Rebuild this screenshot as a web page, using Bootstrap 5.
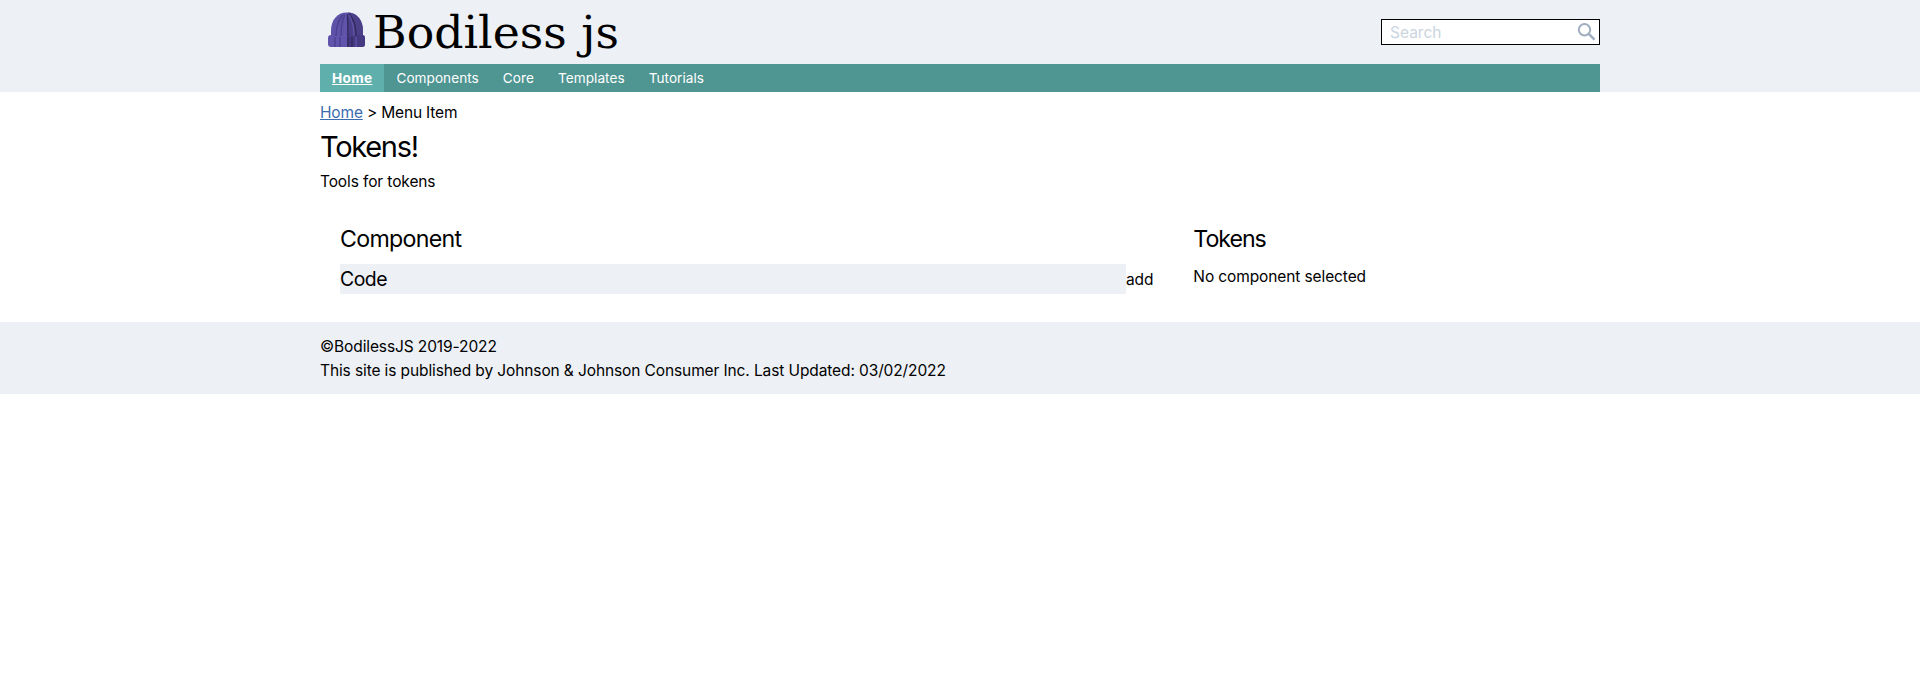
<!DOCTYPE html>
<html lang="en">
<head>
<meta charset="utf-8">
<meta name="viewport" content="width=device-width, initial-scale=1">
<title>Tokens!</title>
<link href="https://cdn.jsdelivr.net/npm/bootstrap@5.3.0/dist/css/bootstrap.min.css" rel="stylesheet">
<style>
body{font-family:Inter,"Liberation Sans",sans-serif;font-size:15.5px;line-height:24px;color:#000;background:#fff;letter-spacing:-.11px}
.site-wrap{width:1280px;margin:0 auto}
.tinted{background:#edf0f5}
.brand-row{height:64px}
.search-box{width:219px;height:26px;border:1px solid #000}
.search-box input{font-size:15.5px;line-height:24px;padding:1px 8px 0;outline:0;height:24px}
.search-box input::placeholder{color:#cbd5e0;opacity:1}
.main-menu{background:#4f9592;height:28px;font-size:13.6px;line-height:20px;letter-spacing:0}
.main-menu a{color:#fff;padding:4px 12px;text-decoration:none}
.main-menu a + a{letter-spacing:.05px}
.main-menu a.active{background:#5fb0ac;font-weight:700;text-decoration:underline;letter-spacing:.35px}
.crumb{letter-spacing:-.17px;padding-top:9px}
.crumb a{color:#3b6cb0}
h1{font-size:29px;line-height:37px;font-weight:400;margin:0;padding-top:3px;letter-spacing:-1.3px}
h2{font-size:23.2px;line-height:32px;font-weight:400;margin:0;letter-spacing:-.7px}
.tokens-title{letter-spacing:-1.05px}
.intro{padding-top:5px}
.tool-columns{padding-top:9px}
.pane{padding:20px}
.pane-body{margin-top:9px}
.selection{margin-top:10px}
.add-link{padding-top:1px}
.code-title{font-size:19.4px;line-height:30px;letter-spacing:-.5px}
.site-footer{margin-top:8px;padding:13px 0 11px}
</style>
</head>
<body>
<header class="tinted">
  <div class="site-wrap">
    <div class="brand-row d-flex align-items-center justify-content-between">
      <svg width="310" height="64" viewBox="0 0 310 64" role="img" aria-label="Bodiless js">
        <path d="M11 36V31C11 20 17 12.500 27 12.500S43 20 43 31v5z" fill="#5e52a8"/>
        <path d="M28 12.500C38 13 43 21 43 31v5H28z" fill="#4b4088"/>
        <rect x="8" y="35" width="37" height="12" rx="3" fill="#6054ac"/>
        <path d="M27 35h15q3 0 3 3v6q0 3-3 3H27z" fill="#453a82"/>
        <path d="M16 36c0-9 2-16 7-21M21 36c0-9 1-16 4-21M31 36c0-9-1-16-3-22M15 37v10M20 37v10" stroke="#493e8b" stroke-width="1.200" fill="none"/>
        <path d="M28 36c0-9 0-16-1-22M36 36c0-10-2-17-7-22M28 37v10M32 37v10" stroke="#34295f" stroke-width="1.400" fill="none"/>
        <path d="M24.500 36c0-9 .5-15 2-22M34 36c0-9-2-16-5-21M36 37v10" stroke="#6257ab" stroke-width="1.200" fill="none"/>
        <text x="53" y="47.500" font-family="'DejaVu Serif','Liberation Serif',serif" font-size="45" letter-spacing="0" textLength="246" lengthAdjust="spacingAndGlyphs" fill="#000">Bodiless js</text>
      </svg>
      <form class="search-box bg-white d-flex align-items-center">
        <input class="border-0 bg-transparent flex-grow-1 w-100" type="text" placeholder="Search" aria-label="Search">
        <svg class="flex-shrink-0" width="24" height="24" viewBox="0 0 24 24" fill="none" stroke="#a0aec0" stroke-width="2"><circle cx="9.500" cy="9.700" r="5.700"/><path d="M13.500 13.700l6 6" stroke-width="2.600"/></svg>
      </form>
    </div>
    <nav class="main-menu d-flex">
      <a class="active" href="#">Home</a><a href="#">Components</a><a href="#">Core</a><a href="#">Templates</a><a href="#">Tutorials</a>
    </nav>
  </div>
</header>
<main class="site-wrap">
  <div class="crumb"><a href="#">Home</a> &gt; Menu Item</div>
  <h1>Tokens!</h1>
  <p class="intro mb-0">Tools for tokens</p>
  <div class="tool-columns row g-0">
    <section class="col-8 pane">
      <h2>Component</h2>
      <div class="pane-body d-flex align-items-center">
        <div class="code-title tinted flex-grow-1">Code</div><span class="add-link">add</span>
      </div>
    </section>
    <section class="col-4 pane">
      <h2 class="tokens-title">Tokens</h2>
      <div class="selection">No component selected</div>
    </section>
  </div>
</main>
<footer class="site-footer tinted">
  <div class="site-wrap">
    <div>©BodilessJS 2019-2022</div>
    <div>This site is published by Johnson &amp; Johnson Consumer Inc. Last Updated: 03/02/2022</div>
  </div>
</footer>
<script src="https://cdn.jsdelivr.net/npm/bootstrap@5.3.0/dist/js/bootstrap.bundle.min.js"></script>
</body>
</html>
